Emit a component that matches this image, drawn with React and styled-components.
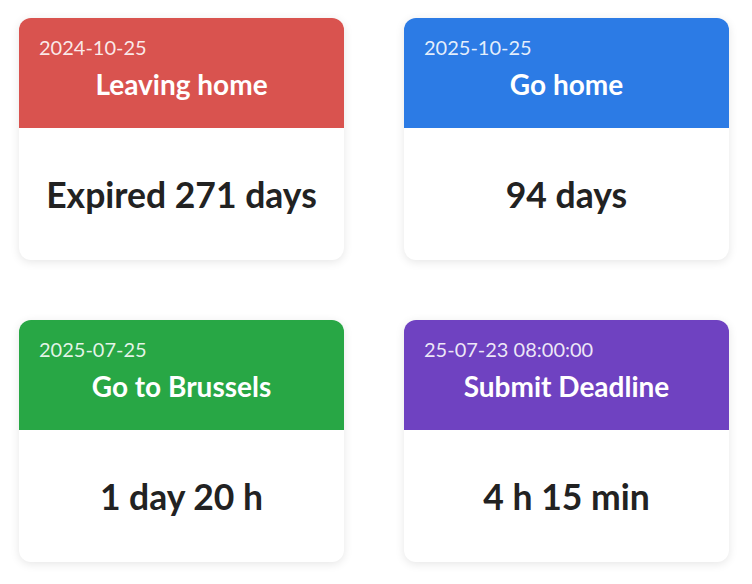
import React from "react";
import styled, { createGlobalStyle } from "styled-components";

const GlobalStyle = createGlobalStyle`
  body {
    margin: 0;
    background: #fff;
    font-family: Lato, "Open Sans", sans-serif;
  }
`;

const events = [
  { date: "2024-10-25", title: "Leaving home", value: "Expired 271 days", color: "#d9534f" },
  { date: "2025-10-25", title: "Go home", value: "94 days", color: "#2c7be5" },
  { date: "2025-07-25", title: "Go to Brussels", value: "1 day 20 h", color: "#28a745" },
  { date: "25-07-23 08:00:00", title: "Submit Deadline", value: "4 h 15 min", color: "#6f42c1" },
];

function App() {
  return (
    <>
      <GlobalStyle />
      <Grid>
        {events.map((ev) => (
          <Card key={ev.title}>
            <Header color={ev.color}>
              <DateText>{ev.date}</DateText>
              <Title>{ev.title}</Title>
            </Header>
            <Body>
              <Value>{ev.value}</Value>
            </Body>
          </Card>
        ))}
      </Grid>
    </>
  );
}

export default App;

const Grid = styled.div`
  display: grid;
  grid-template-columns: 325px 325px;
  column-gap: 60px;
  row-gap: 60px;
  padding: 18px 19px;
`;

const Card = styled.div`
  height: 242px;
  border-radius: 12px;
  overflow: hidden;
  background: #fff;
  box-shadow: 0 2px 10px rgba(0, 0, 0, 0.1);
  display: flex;
  flex-direction: column;
`;

const Header = styled.div`
  height: 110px;
  box-sizing: border-box;
  background: ${(p) => p.color};
  color: #fff;
  padding: 17px 20px 0;
`;

const DateText = styled.div`
  font-size: 20px;
  line-height: 24px;
  color: rgba(255, 255, 255, 0.88);
`;

const Title = styled.div`
  margin-top: 8px;
  font-size: 28px;
  line-height: 34px;
  font-weight: 700;
  text-align: center;
`;

const Body = styled.div`
  flex: 1;
  display: flex;
  align-items: center;
  justify-content: center;
`;

const Value = styled.div`
  font-size: 35.5px;
  font-weight: 700;
  color: #222;
`;
